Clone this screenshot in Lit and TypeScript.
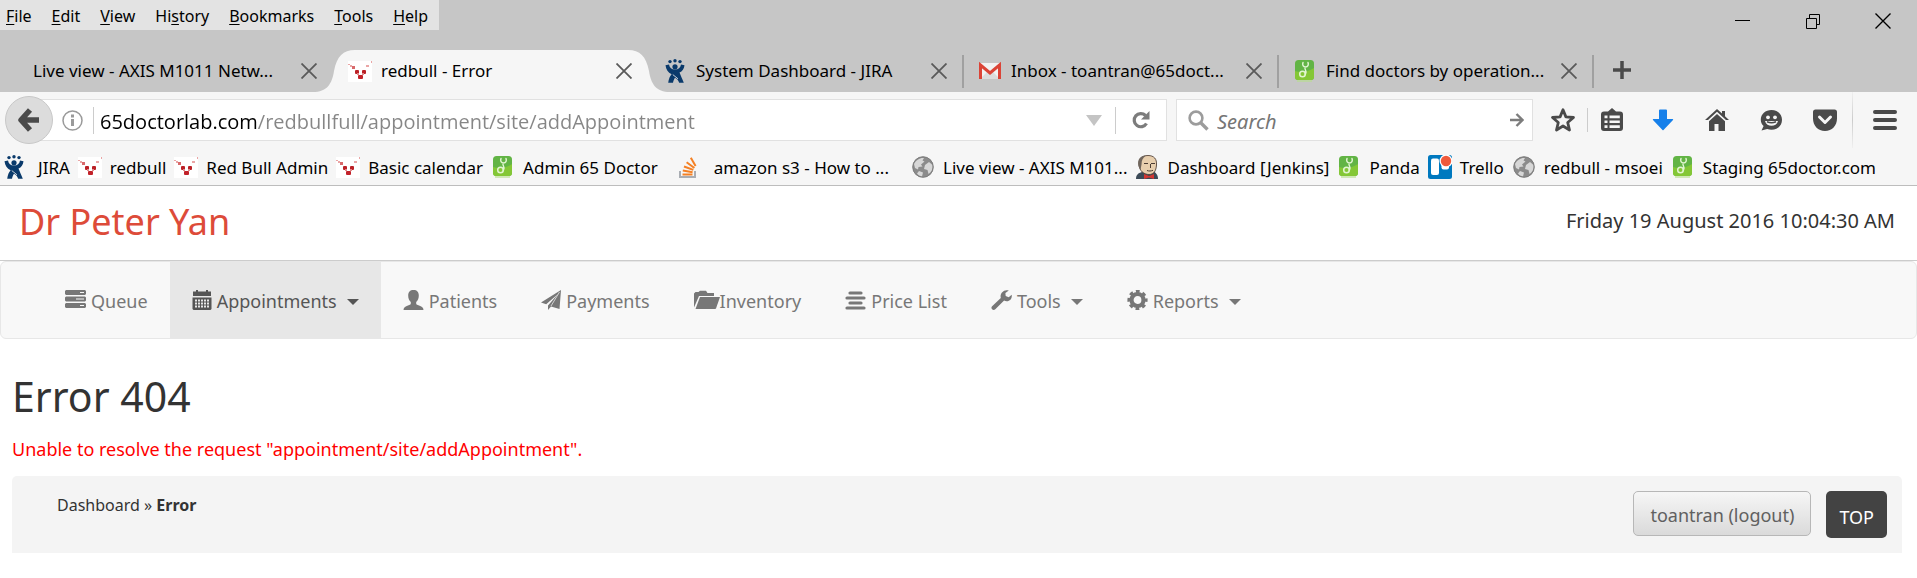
import { LitElement, html, css, svg, nothing, TemplateResult, SVGTemplateResult } from "lit";
import { customElement, property } from "lit/decorators.js";
import { classMap } from "lit/directives/class-map.js";

const icon = (w: number, h: number, body: SVGTemplateResult) =>
  html`<svg width=${w} height=${h} viewBox="0 0 ${w} ${h}" aria-hidden="true">${body}</svg>`;

/* ---- Site icons ---- */

const redbull = () => icon(24, 22, svg`
  <rect width="24" height="21" y="1" fill="#fff"/>
  <path d="M0 4h2v1h2v1h2v2H4V7H2V5H0zM23 1h1v2h-1zM18 5h3v2h-3z" fill="#eaa5a5"/>
  <rect x="4" y="6" width="3" height="3" fill="#d8696b"/>
  <rect x="7" y="10" width="4" height="4" rx="1" fill="#bb2026"/>
  <rect x="14" y="10" width="4" height="4" rx="1" fill="#bb2026"/>
  <rect x="9" y="13" width="2" height="2" fill="#e08a8c"/><rect x="14" y="13" width="2" height="2" fill="#e08a8c"/>
  <rect x="10" y="15" width="5" height="4" rx="1" fill="#c2222a"/>`);

const jira = () => icon(24, 24, svg`
  <g fill="#0a3a6b"><circle cx="7" cy="2.6" r="1.7"/><circle cx="12" cy="1.8" r="1.7"/><circle cx="17" cy="2.6" r="1.7"/>
  <circle cx="12" cy="7.8" r="2.6"/>
  <path d="M2.5 6.2 6 5.4c.6 3.4 2.6 5 6 5s5.400-1.600 6-5l3.500.8c-.4 3.600-2.200 6-5 7.400 1.200 3 2.600 6.200 4.300 10.200h-4.600c-.8-2.200-2-4-4.200-5-.9 1.200-1.600 3-2 5H5.200c.5-4 1.600-6.400 3.400-8.600C5 13.800 3.100 10.600 2.500 6.200z"/></g>
  <path d="m9.800 15.600 5.200 4.200" stroke="#f6f6f6" stroke-width=".8"/>`);

const doctor = () => icon(24, 24, svg`
  <rect x="2" y="1" width="19" height="20" rx="3.500" fill="#62b445"/>
  <path d="M2 12c6 2 13 1 19-3v9a3 3 0 0 1-3 3H5a3 3 0 0 1-3-3z" fill="#84c736"/>
  <rect x="4" y="21" width="15" height="2" fill="#b7e08e" fill-opacity=".6"/>
  <g fill="none" stroke="#e2f5d2" stroke-width="1.500" stroke-linecap="round"><circle cx="9.500" cy="15" r="2.800"/>
  <path d="M12.300 15.500c1.200-2.500.8-4-.3-6M10 3.500c-1 2.500.3 4.500 2.500 4.500S16 6 15 3.500"/></g>`);

const stack = () => icon(24, 24, svg`
  <path d="M4 16v6h15v-6" fill="none" stroke="#a9adb3" stroke-width="2"/>
  <g stroke="#f48024" stroke-width="2" fill="none"><path d="M6.500 19.500h10"/><path d="m6.800 15.600 9.800 1.600"/><path d="m8 11.500 9.300 3.400"/><path d="m10.600 7.200 7.800 5.800"/><path d="m14.800 2.800 4.800 8.200"/></g>`);

const globe = () => icon(24, 24, svg`
  <circle cx="12" cy="12" r="10.500" fill="#8b8b8b"/>
  <path d="M3 9c2-4 6-6.500 10-6l-1.500 2.500 2 1-3.500 3 1.500 2-4 .5-.5 2.500L4 13z" fill="#d7d7d7"/>
  <path d="m14 10 4-3 3.500 3c.4 4-.8 7-4 9l-1-4-3.500-1zM8 16l4 1.500-1 4C9 21 7 20 6 18.500z" fill="#d7d7d7"/>
  <circle cx="12" cy="12" r="10.300" fill="none" stroke="#777" stroke-width=".8"/>`);

const jenkins = () => icon(24, 24, svg`
  <path d="M1 24c0-4 2-6 6-7l10-1c4 1 6 4 6 8z" fill="#3b4a57"/>
  <path d="M4 10C3.500 4 7 .5 13 .5S22 4 21.500 10 19 19.500 14 19.500 4.500 16 4 10z" fill="#e8cfae" stroke="#55443a" stroke-width=".9"/>
  <path d="M3.500 11C2 5 5 .5 11 .5 7.500 3 6.500 6 6.600 9L5.500 15z" fill="#70665d"/>
  <path d="M9 8.500h4M16 8.500h4M12 15.500c2 .8 4 .6 6-.2M15.500 9v4" stroke="#4c3d34" stroke-width="1" fill="none"/>
  <path d="m9 19 5 2 5-2v5l-5-1.500L9 24z" fill="#d33833"/>`);

const trello = () => icon(24, 24, svg`
  <rect width="24" height="24" rx="2.500" fill="#0079bf"/><rect x="3" y="3.500" width="8" height="16.500" rx="2" fill="#fff"/>
  <rect x="13.500" y="3.500" width="7.500" height="11" rx="2" fill="#fff"/><circle cx="18" cy="6" r="6.500" fill="#fff"/><circle cx="18" cy="6" r="5.200" fill="#ef5a3c"/>`);

const gmail = () => icon(24, 20, svg`
  <path d="M2 2h20v16H2z" fill="#f2f2f2"/><path d="m2 18 8-8 2 1.500 2-1.500 8 8z" fill="#dcdcdc"/>
  <path d="M2.500 18V4L12 12l9.500-8v14" fill="none" stroke="#db4437" stroke-width="3"/>`);

/* ---- Navigation icons ---- */

const tasks = () => icon(21, 20, svg`<g fill="currentColor" fill-rule="evenodd">
  <path d="M1 0h19l1 1v3l-1 1H1L0 4V1zM15 2v1h4V2zM1 6.500h19l1 1v3l-1 1H1l-1-1v-3zM11 8.500v1h8v-1zM1 13h19l1 1v3l-1 1H1l-1-1v-3zM15 15v1h4v-1z"/></g>`);
const calendar = () => icon(20, 20, svg`<path fill="currentColor" fill-rule="evenodd"
  d="M1 1.500h3V0h2v1.500h8V0h2v1.500h3V6H1zM.5 7.500h19V19l-1 1h-17l-1-1zM3 9.500v2h2v-2zm3 0v2h2v-2zm3 0v2h2v-2zm3 0v2h2v-2zm3 0v2h2v-2zm-12 3v2h2v-2zm3 0v2h2v-2zm3 0v2h2v-2zm3 0v2h2v-2zm3 0v2h2v-2zm-12 3v2h2v-2zm3 0v2h2v-2zm3 0v2h2v-2zm3 0v2h2v-2zm3 0v2h2v-2z"/>`);
const user = () => icon(21, 20, svg`<path fill="currentColor" d="M10.500 0c3.500 0 5.300 2 5.300 5.500 0 2.800-.9 5-2.600 6.500v1.500c0 .8.600 1.200 1.600 1.600 3.700 1.400 5.700 2.200 5.700 4.900H.5c0-2.700 2-3.500 5.700-4.900 1-.4 1.600-.8 1.600-1.600V12C6.100 10.500 5.200 8.300 5.200 5.500 5.200 2 7 0 10.500 0z"/>`);
const send = () => icon(20, 20, svg`<path fill="currentColor" d="M20 0 0 12.500l5.200 1.800L17 4 7 15.500V20l3-3.500L18.500 19z"/><path d="M18.500 2 10 16" stroke="#f8f8f8" stroke-width=".7"/>`);
const folder = () => icon(26, 20, svg`<path fill="currentColor" d="M0 17.500V3.500L1.500 2h3L6 .8h6L13.500 3H20v3H5z"/><path fill="currentColor" d="M6 7h20l-4 11.500-.8.500H1.500z"/>`);
const alignCenter = () => icon(21, 20, svg`<path d="M5 3h11M2 8h17M5 13h11M2 18h17" stroke="currentColor" stroke-width="3.200" stroke-linecap="round"/>`);
const wrench = () => icon(21, 20, svg`<path fill="currentColor" d="M17.800.6 14.400 3l.3 3 3 1.300 3-2.500c.6 3.400-1.500 6.400-5 6.400-1 0-1.900-.2-2.600-.6L4.300 19.300c-1 .9-2.300.9-3.200 0-.9-.9-.9-2.200 0-3.100L9.800 8C8.500 3.600 12.800-1.400 17.800.6z"/>`);
const cog = () => icon(21, 20, svg`<circle cx="10.500" cy="10" r="6" fill="none" stroke="currentColor" stroke-width="4.200"/>
  <circle cx="10.500" cy="10" r="8.600" fill="none" stroke="currentColor" stroke-width="3" stroke-dasharray="3.700 3.054" stroke-dashoffset="1.850"/>`);

/* ---- Browser glyphs ---- */

const cross = (c: string, w: number) => icon(16, 16, svg`<path d="m.5.5 15 15m0-15-15 15" stroke=${c} stroke-width=${w}/>`);
const plus = icon(18, 18, svg`<path d="M9 0v18M0 9h18" stroke="#4a4a4a" stroke-width="3.500"/>`);
const minimize = icon(16, 16, svg`<path d="M0 7.500h15" stroke="#000"/>`);
const restore = icon(16, 16, svg`<path d="M1.500 5.500h10v10h-10zM4.500 5V1.500h10v10H12" fill="none" stroke="#000"/>`);
const back = icon(22, 24, svg`<path d="M12 2 3 12l9 10M4 12h17" fill="none" stroke="#4a4a4a" stroke-width="5.500" stroke-linejoin="round"/>`);
const info = icon(21, 21, svg`<circle cx="10.500" cy="10.500" r="9.500" fill="none" stroke="#9a9a9a" stroke-width="1.500"/><path d="M10.500 4.500v3M10.500 9v7" stroke="#9a9a9a" stroke-width="3"/>`);
const reload = icon(18, 18, svg`<path d="M14.500 12.500a6.600 6.600 0 1 1-1-8" fill="none" stroke="#7c7c7c" stroke-width="3.200"/><path d="M17.500 0v8.500H9z" fill="#7c7c7c"/>`);
const dropArrow = icon(16, 12, svg`<path d="M0 1h16L8 12z" fill="#c4c4c4"/>`);
const lens = icon(21, 21, svg`<circle cx="8" cy="8" r="6.400" fill="none" stroke="#9c9c9c" stroke-width="2.600"/><path d="m12.500 12.500 7 7" stroke="#9c9c9c" stroke-width="3.400"/>`);
const go = icon(14, 14, svg`<path d="M0 7h12M6.500 1l6 6-6 6" fill="none" stroke="#7c7c7c" stroke-width="2.400"/>`);
const star = icon(26, 26, svg`<path d="m13 2.800 2.900 7.100 7.600.6-5.800 5 1.800 7.500-6.500-4-6.500 4 1.800-7.500-5.800-5 7.600-.6z" fill="none" stroke="#4a4a4a" stroke-width="2.800" stroke-linejoin="round"/>`);
const clip = icon(24, 24, svg`<path fill="#4a4a4a" fill-rule="evenodd" d="M4 3.500h4L12 0l4 3.500h4a3 3 0 0 1 3 3V20a3 3 0 0 1-3 3H4a3 3 0 0 1-3-3V6.500a3 3 0 0 1 3-3zM4.500 7.500v2.800h3V7.500zm5 0v2.800h10.300V7.500zm-5 5v2.500h3v-2.500zm5 0v2.500h10.300v-2.500zm-5 4.700v2.800h3v-2.800zm5 0v2.800h10.300v-2.800z"/>`);
const download = icon(22, 22, svg`<path d="M7 1.500Q7 .5 8 .5h6q1 0 1 1V10h5.500q1.200 0 .5 1l-9.500 10q-.5.500-1 0L1 11q-.7-1 .5-1H7z" fill="#1680ea"/>`);
const home = icon(24, 24, svg`<path d="M12 1 0 12h3l9-8.200 9 8.200h3l-4-3.700V3h-3v2.500z" fill="#4a4a4a"/><path d="M12 6 4 13.200V23h5.500v-7h4v7H20v-9.800z" fill="#4a4a4a"/>`);
const smile = icon(24, 24, svg`<path d="M12.500 2c6 0 10.500 4 10.500 9.800 0 6-4.500 10-10.500 10-1.500 0-3-.3-4.300-.8L2.500 22.500 4.600 18C2.800 16.500 1.800 14.300 1.800 11.800 1.800 6 6.500 2 12.500 2z" fill="#4a4a4a"/>
  <circle cx="9" cy="9.300" r="1.900" fill="#f6f6f6"/><circle cx="16" cy="9.300" r="1.900" fill="#f6f6f6"/><path d="M6 13h13c-1 3.400-3.500 4.800-6.500 4.800S7 16.400 6 13z" fill="#f6f6f6"/><path d="M8 13.800c3 1.200 6 1.200 9 0" stroke="#4a4a4a" stroke-width="1.600" fill="none"/>`);
const pocket = icon(26, 24, svg`<path d="M3.500 1.500h19A2.500 2.500 0 0 1 25 4v6.500c0 7-5 12.500-12 12.500S1 17.500 1 10.500V4a2.500 2.500 0 0 1 2.500-2.500z" fill="#4a4a4a"/><path d="m7.500 9 5.500 5.500L18.500 9" fill="none" stroke="#f6f6f6" stroke-width="3" stroke-linecap="round" stroke-linejoin="round"/>`);
const menu = icon(26, 22, svg`<path d="M3 3h20M3 11h20M3 19h20" stroke="#4a4a4a" stroke-width="4" stroke-linecap="round"/>`);
const cap = icon(42, 42, svg`<path d="M0 42C14 42 19 34 21 21 24 6 30 0 42 0v42z" fill="#f6f6f6"/>`);

type Glyph = () => TemplateResult;

const FONT = css`"Noto Sans", "Open Sans", sans-serif`;

const reset = css`
  * { box-sizing: border-box; }
  svg { display: block; flex: none; }
  a { color: inherit; text-decoration: none; }
  button { margin: 0; padding: 0; border: 0; background: none; color: inherit; font: inherit; cursor: pointer; }
  input { margin: 0; padding: 0; border: 0; outline: none; min-width: 0; background: none; font-family: inherit; }
`;

@customElement("browser-tab")
class BrowserTab extends LitElement {
  @property({ attribute: false }) glyph?: Glyph;
  @property() label = "";
  @property({ type: Boolean, reflect: true }) active = false;
  @property({ type: Boolean, reflect: true }) divided = false;

  static styles = [reset, css`
    :host { display: block; position: relative; flex: 0 1 315px; min-width: 0; }
    :host([active]) { z-index: 1; background: linear-gradient(#f6f6f6, #f6f6f6) center / calc(100% - 41px) 100% no-repeat; }
    .tab { display: flex; align-items: center; height: 42px; padding: 0 17px 0 14px; gap: 9px; position: relative; }
    :host([divided]) .tab { background: linear-gradient(#a0a0a0, #a0a0a0) right center / 2px 33px no-repeat; }
    .label { flex: 1; min-width: 0; overflow: hidden; white-space: nowrap; text-align: left; font-size: 17px; line-height: 24px; }
    .cap { position: absolute; top: 0; left: -21px; }
    .cap.end { left: auto; right: -21px; transform: scaleX(-1); }
  `];

  render() {
    return html`
      ${this.active ? html`<div class="cap">${cap}</div><div class="cap end">${cap}</div>` : nothing}
      <div class="tab">
        ${this.glyph ? this.glyph() : nothing}
        <button class="label" role="tab" aria-selected=${this.active}>${this.label}</button>
        <button aria-label="Close tab">${cross("#5a5a5a", 1.8)}</button>
      </div>`;
  }
}

@customElement("browser-chrome")
class BrowserChrome extends LitElement {
  menus: [string, string, string][] = [
    ["", "F", "ile"], ["", "E", "dit"], ["", "V", "iew"], ["Hi", "s", "tory"],
    ["", "B", "ookmarks"], ["", "T", "ools"], ["", "H", "elp"],
  ];
  tabs: { label: string; glyph?: Glyph; active?: boolean; divided?: boolean }[] = [
    { label: "Live view - AXIS M1011 Netw..." },
    { label: "redbull - Error", glyph: redbull, active: true },
    { label: "System Dashboard - JIRA", glyph: jira, divided: true },
    { label: "Inbox - toantran@65doct...", glyph: gmail, divided: true },
    { label: "Find doctors by operation...", glyph: doctor, divided: true },
  ];
  bookmarks: { label: string; glyph: Glyph; roomy?: boolean }[] = [
    { label: "JIRA", glyph: jira },
    { label: "redbull", glyph: redbull },
    { label: "Red Bull Admin", glyph: redbull },
    { label: "Basic calendar", glyph: redbull },
    { label: "Admin 65 Doctor", glyph: doctor },
    { label: "amazon s3 - How to ...", glyph: stack, roomy: true },
    { label: "Live view - AXIS M101...", glyph: globe },
    { label: "Dashboard [Jenkins]", glyph: jenkins },
    { label: "Panda", glyph: doctor },
    { label: "Trello", glyph: trello },
    { label: "redbull - msoei", glyph: globe },
    { label: "Staging 65doctor.com", glyph: doctor },
  ];

  static styles = [reset, css`
    :host { display: block; color: #000; font-family: ${FONT}; font-size: 17px; line-height: 24px; border-bottom: 1px solid #bdbdbd; background: #f6f6f6; }
    .frame { background: #c6c6c6; }
    .top { display: flex; justify-content: space-between; align-items: flex-start; height: 50px; }
    .menus { display: flex; gap: 20px; height: 30px; padding: 1px 11px 0 6px; align-items: center; background: #e3e3e3; font-size: 16px; }
    .menus u { text-underline-offset: 2px; }
    .window { display: flex; gap: 54px; padding: 13px 26px 0 0; }
    .tabs { display: flex; padding-left: 19px; }
    .new { width: 56px; display: grid; place-items: center; padding-bottom: 2px; }

    .bar { display: flex; align-items: center; height: 56px; }
    .back { position: relative; display: grid; place-items: center; width: 48px; height: 48px; margin-left: 5px; flex: none; border: 1px solid #c8c8c8; border-radius: 50%; background: #dcdcdc; }
    .field { display: flex; align-items: center; height: 42px; border: 1px solid #e1e1e1; background: #fff; }
    .address { flex: 1; min-width: 0; margin-left: -24px; padding-left: 32px; }
    .sep { width: 1px; height: 27px; background: #ccc; flex: none; }
    .info { margin-right: 10px; }
    .url { flex: 1; height: 40px; padding-top: 2px; margin-left: 6px; font-family: "Open Sans", sans-serif; font-size: 20px; color: #000;
      background: linear-gradient(90deg, #000 158px, #868686 158px); -webkit-background-clip: text; background-clip: text; -webkit-text-fill-color: transparent; }
    .drop { margin-right: 13px; }
    .reload { margin: 0 16px; }
    .search { flex: 0 1 357px; min-width: 0; margin-left: 9px; padding: 0 8px 0 11px; gap: 8px; }
    .query { flex: 1; height: 40px; padding-top: 2px; font-size: 20px; }
    .query::placeholder { font-style: italic; color: #757575; opacity: 1; }
    .tools { display: flex; align-items: center; align-self: stretch; padding-left: 6px; }
    .tools button { display: grid; place-items: center; width: 54px; height: 48px; flex: none; }
    .tools .narrow { width: 48px; }
    .tools .wide { width: 64px; }
    .tools .short { height: 24px; }
    .tools .tall { height: 56px; background: linear-gradient(#f0f0f0, #ccc, #f0f0f0); }

    .bookmarks { display: flex; height: 37px; padding: 2px 0 0 2px; gap: 8px; align-items: center; white-space: nowrap; overflow: hidden; }
    .bookmark { display: flex; align-items: center; gap: 8px; }
    .bookmark svg { margin-bottom: 2px; }
    .bookmark.first { gap: 12px; }
    .bookmark.roomy { gap: 14px; margin: 0 14px 0 10px; }
  `];

  render() {
    return html`
      <header class="frame">
        <div class="top">
          <nav class="menus" aria-label="Application menu">
            ${this.menus.map(([a, b, c]) => html`<button>${a}<u>${b}</u>${c}</button>`)}
          </nav>
          <div class="window">
            <button aria-label="Minimize">${minimize}</button>
            <button aria-label="Restore">${restore}</button>
            <button aria-label="Close">${cross("#000", 1.4)}</button>
          </div>
        </div>
        <div class="tabs" role="tablist">
          ${this.tabs.map(t => html`<browser-tab .label=${t.label} .glyph=${t.glyph} ?active=${t.active} ?divided=${t.divided}></browser-tab>`)}
          <button class="new" aria-label="New tab">${plus}</button>
        </div>
      </header>
      <div class="bar">
        <button class="back" aria-label="Back">${back}</button>
        <div class="field address">
          <button class="info" aria-label="Site information">${info}</button>
          <span class="sep"></span>
          <input class="url" type="text" aria-label="Address" .value=${"65doctorlab.com/redbullfull/appointment/site/addAppointment"}>
          <button class="drop" aria-label="Show history">${dropArrow}</button>
          <span class="sep"></span>
          <button class="reload" aria-label="Reload">${reload}</button>
        </div>
        <div class="field search">
          ${lens}
          <input class="query" type="text" aria-label="Search" placeholder="Search">
          <button aria-label="Go">${go}</button>
        </div>
        <div class="tools">
          <button class="narrow" aria-label="Bookmark this page">${star}</button>
          <span class="sep short"></span>
          <button class="narrow" aria-label="Show bookmarks">${clip}</button>
          <button aria-label="Downloads">${download}</button>
          <button aria-label="Home">${home}</button>
          <button aria-label="Chat">${smile}</button>
          <button aria-label="Pocket">${pocket}</button>
          <span class="sep tall"></span>
          <button class="wide" aria-label="Open menu">${menu}</button>
        </div>
      </div>
      <nav class="bookmarks" aria-label="Bookmarks">
        ${this.bookmarks.map((b, i) => html`
          <a href="#" class=${classMap({ bookmark: true, first: i === 0, roomy: !!b.roomy })}>${b.glyph()}<span>${b.label}</span></a>`)}
      </nav>`;
  }
}

@customElement("clinic-page")
class ClinicPage extends LitElement {
  items: { label: string; glyph: Glyph; active?: boolean; menu?: boolean; tight?: boolean }[] = [
    { label: "Queue", glyph: tasks },
    { label: "Appointments", glyph: calendar, active: true, menu: true },
    { label: "Patients", glyph: user },
    { label: "Payments", glyph: send },
    { label: "Inventory", glyph: folder, tight: true },
    { label: "Price List", glyph: alignCenter },
    { label: "Tools", glyph: wrench, menu: true },
    { label: "Reports", glyph: cog, menu: true },
  ];

  static styles = [reset, css`
    :host { display: block; background: #fff; color: #333; font-family: ${FONT}; font-size: 18px; line-height: 26px; }
    .head { display: flex; justify-content: space-between; align-items: flex-start; height: 75px; padding: 12px 22px 0 19px; border-bottom: 1px solid #ccc; }
    .brand { color: #dd4b39; font-size: 36px; line-height: 48px; }
    .clock { font-size: 20px; line-height: 28px; padding-top: 9px; }
    .nav { display: flex; padding-left: 42px; border: 1px solid #e7e7e7; border-radius: 6px; background: #f8f8f8; color: #777; }
    .item { display: flex; align-items: center; height: 76px; padding: 1px 22px 0; gap: 5px; }
    .item svg { margin-bottom: 2px; }
    .item.tight { gap: 0; }
    .item.active { background: #e7e7e7; color: #555; }
    .caret { margin-left: 5px; margin-top: 3px; border: 6px solid transparent; border-top-color: currentColor; border-bottom: 0; }
    main { padding: 0 15px 0 12px; }
    h1 { margin: 29px 0 0; font-size: 41px; line-height: 56px; font-weight: 400; }
    .error { margin: 12px 0 14px; color: #f00; }
    footer { display: flex; justify-content: space-between; align-items: flex-start; height: 77px; padding: 15px 15px 0 45px; border-radius: 5px 5px 0 0; background: #f4f4f4; }
    .crumbs { font-size: 16px; line-height: 24px; padding-top: 2px; }
    .actions { display: flex; align-items: flex-start; gap: 15px; }
    .logout { padding: 10px 16px 7px; border: 1px solid #b7b7b7; border-radius: 5px; background: linear-gradient(#f6f6f6, #dadada); color: #606060; }
    .top { padding: 13px 13px 8px; border-radius: 5px; background: #434343; color: #fff; }
  `];

  render() {
    return html`
      <header class="head">
        <a class="brand" href="#">Dr Peter Yan</a>
        <time class="clock" datetime="2016-08-19T10:04:30">Friday 19 August 2016 10:04:30 AM</time>
      </header>
      <nav class="nav">
        ${this.items.map(i => html`
          <a href="#" class=${classMap({ item: true, active: !!i.active, tight: !!i.tight })}>
            ${i.glyph()}<span>${i.label}</span>${i.menu ? html`<span class="caret"></span>` : nothing}
          </a>`)}
      </nav>
      <main>
        <h1>Error 404</h1>
        <p class="error">Unable to resolve the request "appointment/site/addAppointment".</p>
        <footer>
          <div class="crumbs"><a href="#">Dashboard</a> » <b>Error</b></div>
          <div class="actions">
            <button class="logout">toantran (logout)</button>
            <a class="top" href="#">TOP</a>
          </div>
        </footer>
      </main>`;
  }
}

@customElement("app-root")
class AppRoot extends LitElement {
  static styles = css`:host { display: block; min-height: 100vh; background: #fff; }`;
  render() {
    return html`<browser-chrome></browser-chrome><clinic-page></clinic-page>`;
  }
}
